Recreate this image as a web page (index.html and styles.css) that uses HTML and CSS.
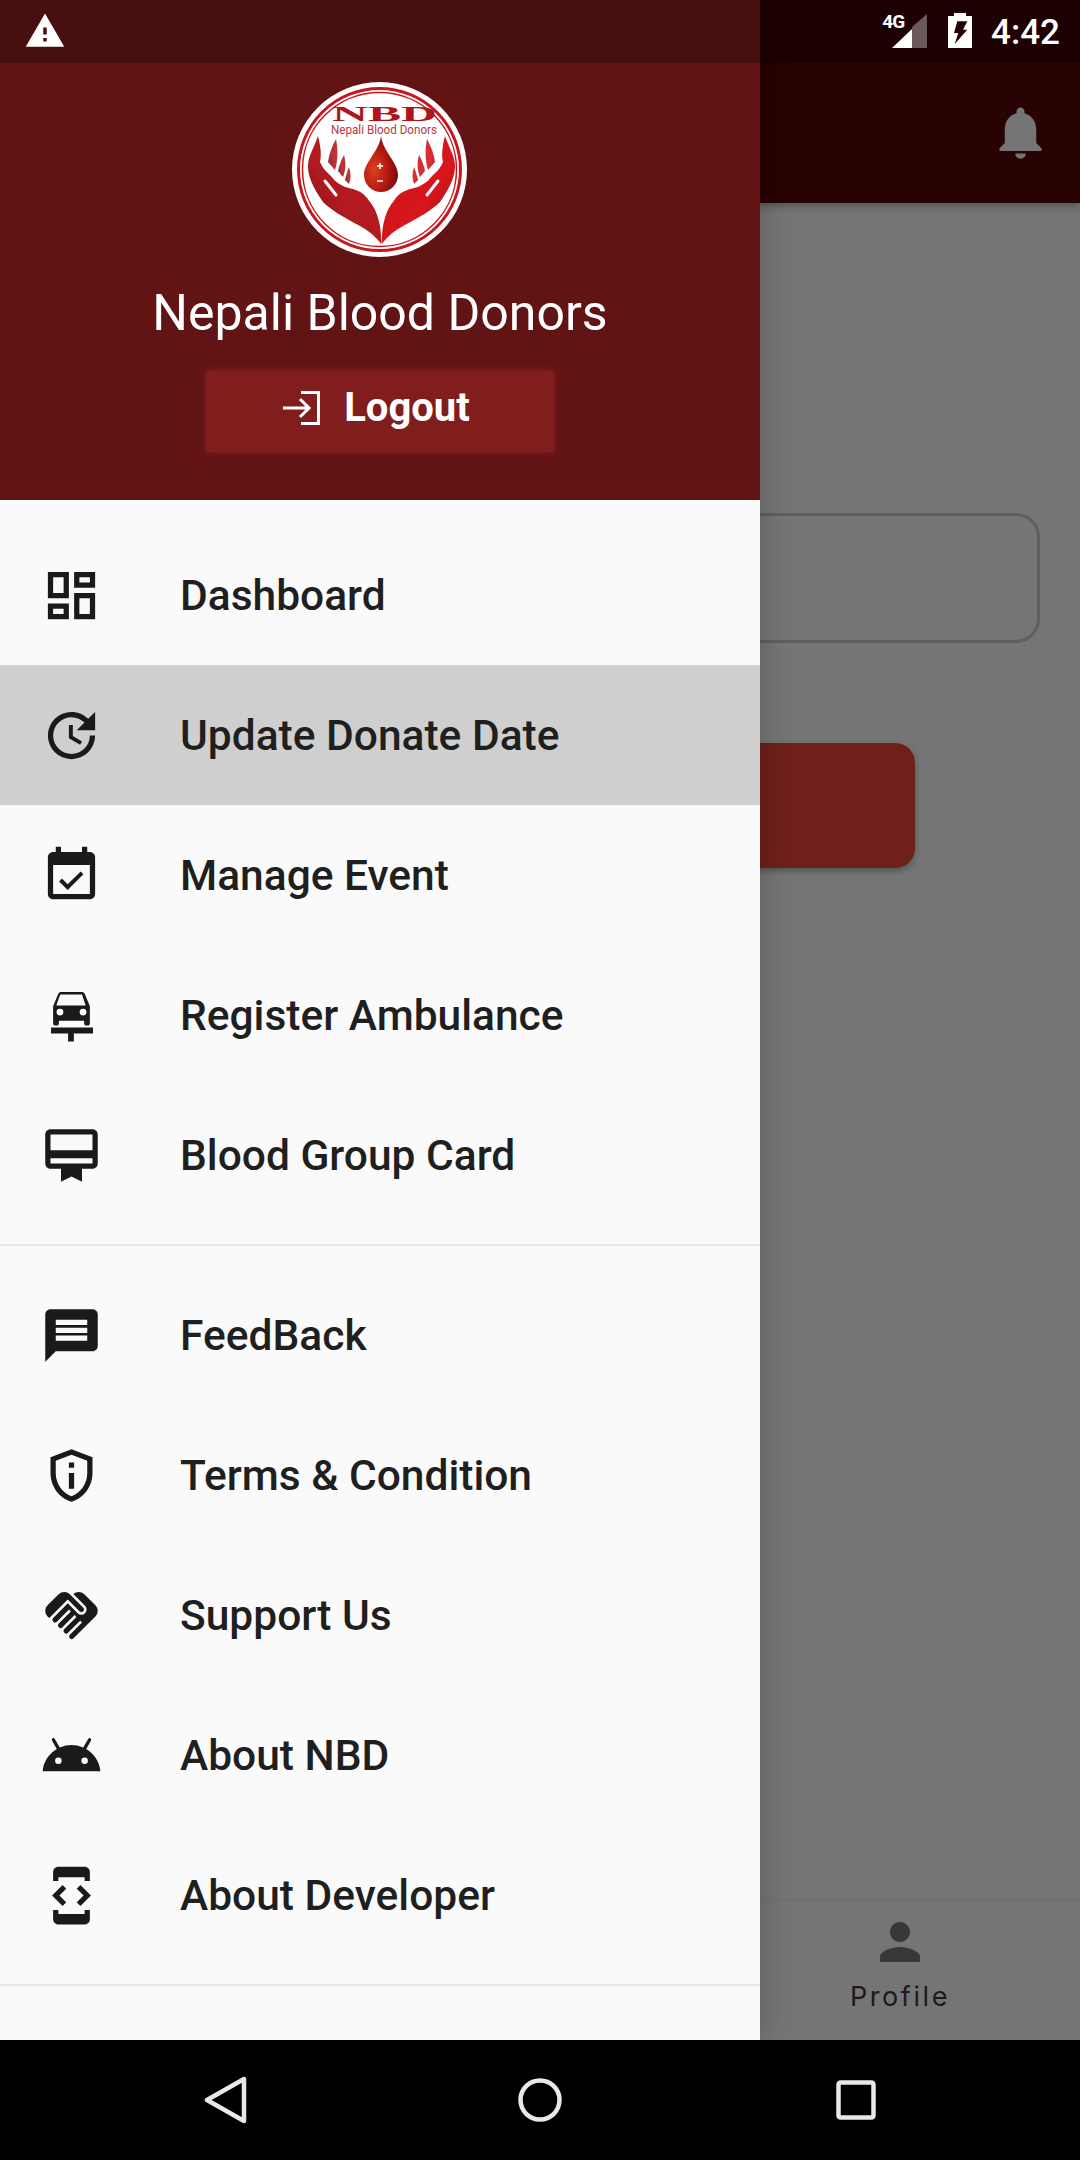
FILE: index.html
```html
<!DOCTYPE html>
<html lang="en">
<head>
<meta charset="utf-8">
<title>Nepali Blood Donors</title>
<link rel="stylesheet" href="styles.css">
</head>
<body>
<div class="screen">
  <div class="app">
    <div class="app-status"></div>
    <div class="app-bar">
      <svg class="bell" viewBox="0 0 24 24"><path d="M12 22c1.100 0 2-.9 2-2h-4c0 1.100.9 2 2 2zm6-6v-5c0-3.070-1.640-5.640-4.500-6.320V4c0-.83-.67-1.500-1.500-1.500s-1.500.67-1.500 1.500v.68C7.630 5.360 6 7.920 6 11v5l-2 2v1h16v-1l-2-2z"/></svg>
    </div>
    <div class="app-body">
      <div class="field"></div>
      <div class="submit"></div>
    </div>
    <div class="tabs">
      <div class="tab">
        <svg class="tab-icon" viewBox="0 0 24 24"><path d="M12 12c2.210 0 4-1.790 4-4s-1.790-4-4-4-4 1.790-4 4 1.790 4 4 4zm0 2c-2.670 0-8 1.340-8 4v2h16v-2c0-2.660-5.330-4-8-4z"/></svg>
        <span class="tab-label">Profile</span>
      </div>
    </div>
  </div>

  <aside class="drawer">
    <div class="drawer-status">
      <svg class="warn" viewBox="0 0 24 24"><path d="M1 21h22L12 2 1 21zm12-3h-2v-2h2v2zm0-4h-2v-4h2v4z"/></svg>
    </div>
    <header class="drawer-head">
      <svg class="logo" viewBox="0 0 176 176">
        <defs>
          <linearGradient id="hl" x1="0" y1="0" x2="1" y2="1"><stop offset="0" stop-color="#c01a20"/><stop offset=".6" stop-color="#b01a20"/><stop offset="1" stop-color="#6d0e12"/></linearGradient>
          <linearGradient id="hr" x1="0" y1="0" x2="1" y2="1"><stop offset="0" stop-color="#c8161d"/><stop offset=".6" stop-color="#d8161c"/><stop offset="1" stop-color="#9a1216"/></linearGradient>
          <radialGradient id="dr" cx="0.3" cy="0.6" r="0.85"><stop offset="0" stop-color="#e0401a"/><stop offset=".5" stop-color="#b01512"/><stop offset="1" stop-color="#540a0a"/></radialGradient>
          <g id="hand">
            <path d="M153 54C157 66 163 74 163 84C163 94 159 104 148 120C140 128 128 135 111 144C103 148 96 154 89.500 162C90 156 90 150 91 144C93 134 96 126 101 120C105 114 108 111 113 109C119 106 124 106 128 104C134 101 137 98 140 94C145 90 149 85 151 80C149 72 151 62 153 54Z"/>
            <path d="M135 57C139 64 142 72 143 80L136 88C133 78 133 68 135 57Z" opacity=".9"/>
            <path d="M127 73C130 78 132 84 133 89L128 95C125 88 125 80 127 73Z" opacity=".9"/>
            <path d="M122 85C124 90 125 94 126 98L122 102C120 97 120 91 122 85Z" opacity=".9"/>
          </g>
        </defs>
        <circle cx="87.500" cy="87.500" r="87.500" fill="#fff"/>
        <circle cx="87.500" cy="87.500" r="81" fill="none" stroke="#c8161d" stroke-width="3"/>
        <circle cx="87.500" cy="87.500" r="77" fill="none" stroke="#c8161d" stroke-width="1.500"/>
        <text class="logo-nbd" x="40" y="39" textLength="105" lengthAdjust="spacingAndGlyphs">NBD</text>
        <text class="logo-sub" x="39" y="52" textLength="106" lengthAdjust="spacingAndGlyphs">Nepali Blood Donors</text>
        <use href="#hand" fill="url(#hr)"/>
        <use href="#hand" fill="url(#hl)" transform="translate(179 0) scale(-1 1)"/>
        <path d="M146 99 135 113" stroke="#fff" stroke-width="3" stroke-linecap="round"/>
        <path d="M33 99 44 113" stroke="#fff" stroke-width="3" stroke-linecap="round"/>
        <path d="M89 54C91 70 106 80 106 93a17 17 0 0 1-34 0C72 80 87 70 89 54z" fill="url(#dr)"/>
        <path d="M85 84h6M88 81v6M85 99h6" stroke="#fff" stroke-width="1.500" fill="none"/>
      </svg>
      <h1 class="brand">Nepali Blood Donors</h1>
      <button class="logout" type="button">
        <svg class="logout-icon" viewBox="0 0 37 34"><path d="M0 17h26M17 8l9 9-9 9M18 1.500h17.500v31H18" fill="none" stroke="#fff" stroke-width="3"/></svg>
        <span>Logout</span>
      </button>
    </header>
    <nav class="menu">
      <div class="group">
        <div class="item">
          <svg class="ico" viewBox="0 0 24 24"><path d="M19 5v2h-4V5h4M9 5v6H5V5h4m10 8v6h-4v-6h4M9 17v2H5v-2h4M21 3h-8v6h8V3zM11 3H3v10h8V3zm10 8h-8v10h8V11zm-10 4H3v6h8v-6z"/></svg>
          <span>Dashboard</span>
        </div>
        <div class="item active">
          <svg class="ico" viewBox="0 0 24 24"><path d="M11 8v5l4.250 2.520.77-1.280-3.520-2.090V8H11zm10 2V3l-2.640 2.640C16.740 4.010 14.490 3 12 3a9 9 0 1 0 9 9h-2c0 3.860-3.140 7-7 7s-7-3.140-7-7 3.140-7 7-7c1.930 0 3.680.79 4.950 2.050L14 10h7z"/></svg>
          <span>Update Donate Date</span>
        </div>
        <div class="item">
          <svg class="ico" viewBox="0 1 24 24"><path d="M19 4h-1V2h-2v2H8V2H6v2H5c-1.110 0-2 .9-2 2v14c0 1.100.89 2 2 2h14c1.100 0 2-.9 2-2V6c0-1.100-.9-2-2-2zm0 16H5V9h14v11zM10.540 18.500 7.290 15.250l1.060-1.060 2.190 2.190 4.950-4.950 1.060 1.060-6.010 6.010z"/></svg>
          <span>Manage Event</span>
        </div>
        <div class="item">
          <svg class="ico" viewBox="0 0 24 24"><path fill-rule="evenodd" d="M17 3.600C16.800 3.200 16.400 3 16 3H8c-.4 0-.8.2-1 .6L5 8.500V15c0 .4.300.8.800.8h.6c.4 0 .8-.4.8-.8v-1h9.600v1c0 .4.400.8.800.8h.6c.5 0 .8-.4.8-.8V8.500L17 3.600zM7.700 4h8.300l1.400 4.200H6.200L7.700 4zM7.600 12a1.300 1.300 0 1 1 0-2.600 1.300 1.300 0 0 1 0 2.600zm8.800 0a1.300 1.300 0 1 1 0-2.600 1.300 1.300 0 0 1 0 2.600z"/><path d="M4.200 16.600h16v2.300h-7.300v3h-2.200v-3H4.200z"/></svg>
          <span>Register Ambulance</span>
        </div>
        <div class="item">
          <svg class="ico" viewBox="0 0 24 24"><path d="M20 2H4c-1.110 0-2 .89-2 2v11c0 1.110.89 2 2 2h4v5l4-2 4 2v-5h4c1.110 0 2-.89 2-2V4c0-1.110-.89-2-2-2zm0 13H4v-2h16v2zm0-5H4V4h16v6z"/></svg>
          <span>Blood Group Card</span>
        </div>
      </div>
      <div class="group">
        <div class="item">
          <svg class="ico" viewBox="0 0 24 24"><path d="M20 2H4c-1.100 0-1.990.9-1.990 2L2 22l4-4h14c1.100 0 2-.9 2-2V4c0-1.100-.9-2-2-2zM6 14v-2h12v2H6zm0-3V9h12v2H6zm0-3V6h12v2H6z"/></svg>
          <span>FeedBack</span>
        </div>
        <div class="item">
          <svg class="ico" viewBox="0 0 24 24"><path d="M12 2 4 5v6.090c0 5.050 3.410 9.760 8 10.910 4.590-1.150 8-5.860 8-10.910V5l-8-3zm6 9.090c0 4-2.550 7.700-6 8.830-3.450-1.130-6-4.820-6-8.830v-4.700l6-2.250 6 2.250v4.700zM11 7h2v2h-2zm0 4h2v6h-2z"/></svg>
          <span>Terms &amp; Condition</span>
        </div>
        <div class="item">
          <svg class="ico" viewBox="0 0 24 24"><path d="M16.480 10.410c-.39.39-1.040.39-1.430 0l-4.470-4.460-7.050 7.040-.66-.63a3 3 0 0 1 0-4.240l4.240-4.240a3 3 0 0 1 4.240 0L16.480 9c.39.39.39 1.020 0 1.410zm.7-2.120c.78.78.78 2.050 0 2.830-1.270 1.270-2.610.22-2.830 0l-3.760-3.760-5.570 5.570a.996.996 0 1 0 1.410 1.410l4.620-4.620.71.71-4.620 4.620a.996.996 0 1 0 1.410 1.410l4.620-4.620.71.71-4.620 4.620a.996.996 0 1 0 1.410 1.410l4.620-4.620.71.71-4.620 4.620a.996.996 0 1 0 1.410 1.410l8.320-8.340a3 3 0 0 0 0-4.240l-4.240-4.240a3.001 3.001 0 0 0-4.180-.06l4.470 4.470z"/></svg>
          <span>Support Us</span>
        </div>
        <div class="item">
          <svg class="ico" viewBox="0 0 24 24"><path d="M17.600 9.480l1.840-3.180c.16-.31.040-.69-.26-.85-.29-.15-.65-.06-.83.220l-1.880 3.240a11.430 11.430 0 0 0-8.940 0L5.650 5.670c-.19-.29-.58-.38-.87-.2-.28.180-.37.540-.22.830L6.400 9.480C3.300 11.250 1.280 14.440 1 18h22c-.28-3.560-2.300-6.750-5.400-8.520zM7 15.250a1.250 1.250 0 1 1 0-2.500 1.250 1.250 0 0 1 0 2.500zm10 0a1.250 1.250 0 1 1 0-2.500 1.250 1.250 0 0 1 0 2.500z"/></svg>
          <span>About NBD</span>
        </div>
        <div class="item">
          <svg class="ico" viewBox="0 0 24 24"><path d="M7 1c-1.100 0-2 .9-2 2v3.500h2V5h10v1.500h2V3c0-1.100-.9-2-2-2H7zM5 17.500V21c0 1.100.9 2 2 2h10c1.100 0 2-.9 2-2v-3.500h-2V19H7v-1.500H5zM8.600 8 4.600 12l4 4 1.400-1.400L7.400 12 10 9.400 8.600 8zm6.800 0L14 9.400l2.600 2.600-2.600 2.600 1.400 1.400 4-4-4-4z"/></svg>
          <span>About Developer</span>
        </div>
      </div>
    </nav>
  </aside>

  <div class="status-right">
    <span class="net">4G</span>
    <svg class="signal" viewBox="0 0 35 34"><path d="M35 0v34H20V13z" fill="#fff" opacity=".35"/><path d="M20 15v19H0z" fill="#fff"/></svg>
    <svg class="battery" viewBox="0 0 24 35"><path d="M6 0h12v3h6v32H0V3h6z" fill="#fff"/><path d="M9.300 8.300h10L15 16.700h4.300L6.700 31l3.600-11H6z" fill="#230103"/></svg>
    <span class="clock">4:42</span>
  </div>

  <div class="navbar">
    <svg class="nav-ico" viewBox="0 0 44 48"><path d="M3 24 40 3v42z" fill="none" stroke="#e8e8e8" stroke-width="4.500" stroke-linejoin="round"/></svg>
    <svg class="nav-ico" viewBox="0 0 44 44"><circle cx="22" cy="22" r="19.500" fill="none" stroke="#e8e8e8" stroke-width="4.500"/></svg>
    <svg class="nav-ico" viewBox="0 0 40 40"><rect x="2.500" y="2.500" width="35" height="35" rx="2" fill="none" stroke="#e8e8e8" stroke-width="4.500"/></svg>
  </div>
</div>
</body>
</html>
```

FILE: styles.css
```css
* { box-sizing: border-box; }
html, body { margin: 0; padding: 0; }
body { font-family: Roboto, "Noto Sans", sans-serif; background: #000; }

.screen {
  position: relative;
  width: 1080px;
  height: 2160px;
  overflow: hidden;
  display: flex;
  flex-direction: column;
}

/* Dimmed app behind the drawer */
.app {
  height: 2040px;
  flex: none;
  display: flex;
  flex-direction: column;
  background: #757575;
}
.app-status { height: 63px; background: #1d0102; flex: none; }
.app-bar {
  height: 140px;
  flex: none;
  background: #290203;
  display: flex;
  justify-content: flex-end;
  padding-top: 38px;
  box-shadow: 0 3px 8px rgba(0, 0, 0, .3);
  position: relative;
}
.bell { width: 63px; height: 63px; fill: #757575; margin-right: 28px; }
.app-body { flex: 1; position: relative; }
.field {
  position: absolute;
  left: 500px;
  top: 310px;
  width: 540px;
  height: 130px;
  border: 3px solid #5f5f5f;
  border-radius: 24px;
}
.submit {
  position: absolute;
  left: 500px;
  top: 540px;
  width: 415px;
  height: 125px;
  background: #6f201a;
  border-radius: 20px;
  box-shadow: 0 3px 6px rgba(0, 0, 0, .3);
}
.tabs {
  height: 140px;
  flex: none;
  border-top: 1px solid #6f6f6f;
  display: flex;
  justify-content: flex-end;
}
.tab {
  width: 360px;
  padding-top: 11px;
  display: flex;
  flex-direction: column;
  align-items: center;
}
.tab-icon { width: 60px; height: 60px; fill: #383838; }
.tab-label {
  font-family: Inter, Roboto, sans-serif;
  font-size: 27px;
  line-height: 32px;
  letter-spacing: 2.600px;
  color: #1b1b1b;
  margin-top: 9px;
}

/* Drawer */
.drawer {
  position: absolute;
  left: 0;
  top: 0;
  width: 760px;
  height: 2040px;
  background: #fafafa;
  box-shadow: 6px 0 24px rgba(0, 0, 0, .16);
  display: flex;
  flex-direction: column;
}
.drawer-status {
  height: 63px;
  flex: none;
  background: #470f0f;
  padding: 10px 0 0 24px;
}
.warn { display: block; width: 42px; height: 42px; fill: #fff; }
.drawer-head {
  height: 437px;
  flex: none;
  background: #621415;
  display: flex;
  flex-direction: column;
  align-items: center;
  padding-top: 19px;
}
.logo { width: 176px; height: 176px; flex: none; }
.logo-nbd {
  font-family: "Liberation Serif", serif;
  font-weight: 700;
  font-size: 20px;
  fill: #b0141b;
}
.logo-sub {
  font-family: Roboto, sans-serif;
  font-size: 13px;
  fill: #b53a3d;
}
.brand {
  margin: 27px 0 0;
  font-size: 50px;
  line-height: 56px;
  font-weight: 400;
  color: #fff;
}
.logout {
  margin-top: 30px;
  width: 348px;
  height: 81px;
  background: #821d1e;
  border: none;
  border-radius: 2px;
  box-shadow: 0 0 6px 1px #821d1e;
  color: #fff;
  font-family: Roboto, sans-serif;
  font-size: 40px;
  font-weight: 700;
  display: flex;
  align-items: center;
  justify-content: center;
  gap: 24px;
  padding: 0 7px 8px 0;
}
.logout-icon { width: 37px; height: 34px; }

.menu { flex: 1; padding-top: 25px; }
.group { border-bottom: 2px solid #e8e8e8; padding-bottom: 19px; margin-bottom: 19px; }
.group + .group { margin-bottom: 0; }
.item {
  height: 140px;
  display: flex;
  align-items: center;
  padding-left: 40px;
  font-size: 42.500px;
  font-weight: 500;
  color: #1f1f1f;
}
.ico { width: 63px; height: 63px; margin-right: 77px; fill: #1a1a1a; flex: none; }
.active { background: #cfcfcf; }

/* Status overlay on the right */
.status-right {
  position: absolute;
  right: 0;
  top: 0;
  height: 63px;
  display: flex;
  align-items: flex-start;
  color: #fff;
}
.net {
  font-family: Roboto, sans-serif;
  font-size: 19px;
  font-weight: 700;
  line-height: 16px;
  letter-spacing: -1px;
  margin-top: 14px;
  margin-right: -12px;
}
.signal { width: 35px; height: 34px; margin-top: 14px; flex: none; }
.battery { width: 24px; height: 35px; margin: 13px 0 0 21px; flex: none; }
.clock {
  font-size: 35px;
  font-weight: 500;
  line-height: 40px;
  margin: 13px 20px 0 19px;
}

/* Nav bar */
.navbar {
  height: 120px;
  flex: none;
  background: #000;
  display: flex;
  align-items: center;
}
.nav-ico:nth-child(1) { width: 44px; height: 48px; margin-left: 204px; }
.nav-ico:nth-child(2) { width: 44px; height: 44px; margin-left: 270px; }
.nav-ico:nth-child(3) { width: 40px; height: 40px; margin-left: 274px; }
```
